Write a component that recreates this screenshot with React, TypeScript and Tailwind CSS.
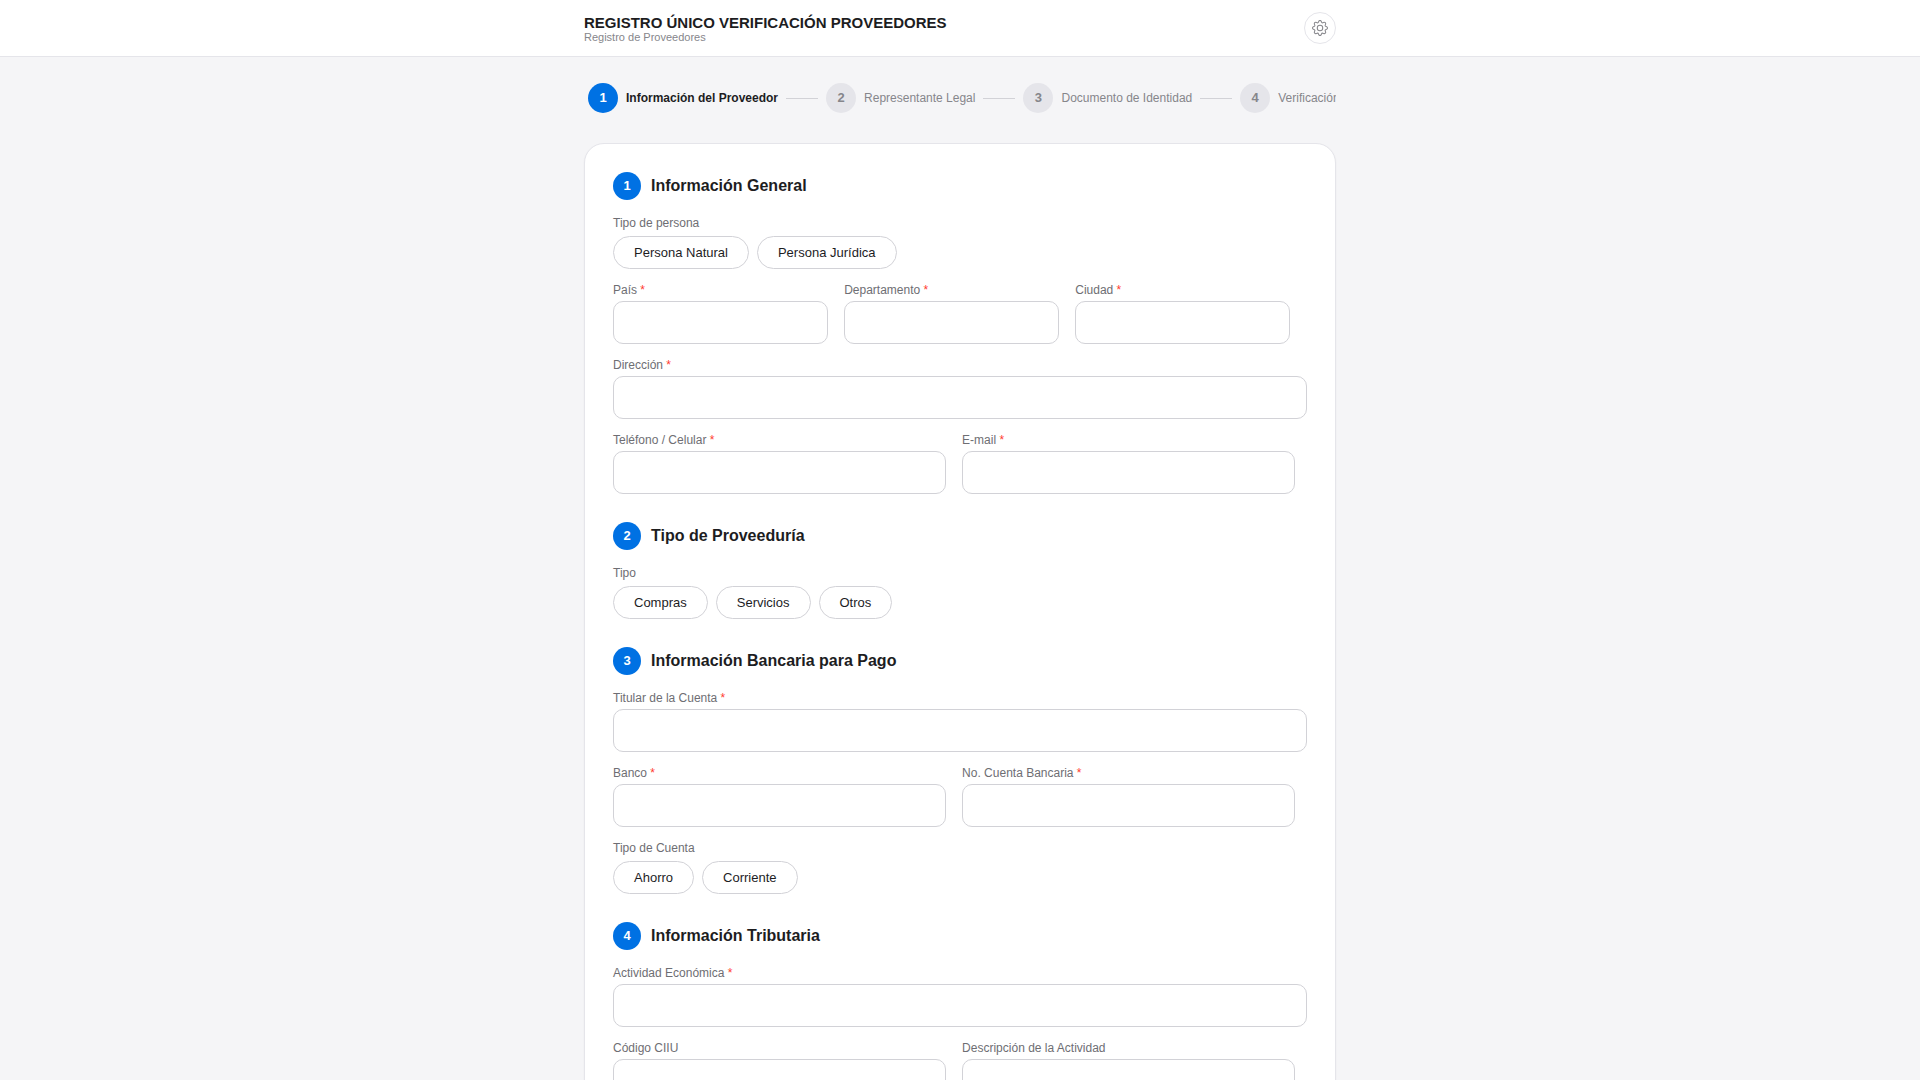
import { useId, useState } from "react";
import type { ReactNode } from "react";
import { BsGear } from "react-icons/bs";

const steps = [
  "Información del Proveedor",
  "Representante Legal",
  "Documento de Identidad",
  "Verificación",
];

function Stepper({ current }: { current: number }) {
  return (
    <nav aria-label="Pasos del registro" className="overflow-hidden px-1 pb-[30px]">
      <ol className="flex items-center gap-2">
        {steps.map((label, i) => {
          const active = i + 1 === current;
          return (
            <li key={label} className="flex shrink-0 items-center gap-2" aria-current={active ? "step" : undefined}>
              {i > 0 && <span className="h-px w-8 bg-[#d2d2d7]" />}
              <span
                className={
                  active
                    ? "flex size-[30px] items-center justify-center rounded-full bg-[#0071e3] text-[13px] font-bold text-white"
                    : "flex size-[30px] items-center justify-center rounded-full bg-[#e5e5ea] text-[13px] font-bold text-[#86868b]"
                }
              >
                {i + 1}
              </span>
              <span
                className={
                  active
                    ? "text-[12px] font-bold whitespace-nowrap text-[#1d1d1f]"
                    : "text-[12px] whitespace-nowrap text-[#86868b]"
                }
              >
                {label}
              </span>
            </li>
          );
        })}
      </ol>
    </nav>
  );
}

function Section({ number, title, children }: { number: number; title: string; children: ReactNode }) {
  return (
    <section>
      <div className="mb-4 flex items-center gap-[10px]">
        <span className="flex size-7 items-center justify-center rounded-full bg-[#0071e3] text-[13px] font-bold text-white">
          {number}
        </span>
        <h2 className="text-[16px] leading-5 font-bold text-[#1d1d1f]">{title}</h2>
      </div>
      <div className="flex flex-col gap-[14px]">{children}</div>
    </section>
  );
}

function Field({
  label,
  required = false,
  type = "text",
  width = "w-full",
}: {
  label: string;
  required?: boolean;
  type?: string;
  width?: string;
}) {
  const id = useId();
  return (
    <div className={width}>
      <label htmlFor={id} className="mb-1 block text-[12px] leading-[14px] text-[#6e6e73]">
        {label}
        {required && <span className="text-[#ff3b30]"> *</span>}
      </label>
      <input
        id={id}
        type={type}
        required={required}
        className="block h-[43px] w-full rounded-[10px] border border-[#d2d2d7] bg-white px-[14px] text-[15px] text-[#1d1d1f] outline-none focus:border-[#0071e3]"
      />
    </div>
  );
}

function Row({ children }: { children: ReactNode }) {
  return <div className="flex gap-4">{children}</div>;
}

function Choice({ label, options }: { label: string; options: string[] }) {
  const id = useId();
  const [selected, setSelected] = useState("");
  return (
    <div role="group" aria-labelledby={id}>
      <div id={id} className="mb-[6px] text-[12px] leading-[14px] text-[#6e6e73]">
        {label}
      </div>
      <div className="flex flex-wrap gap-2">
        {options.map((option) => (
          <button
            key={option}
            type="button"
            aria-pressed={selected === option}
            onClick={() => setSelected(option)}
            className="cursor-pointer rounded-full border border-[#d2d2d7] bg-white px-5 py-2 text-[13px] leading-[15px] text-[#1d1d1f] aria-pressed:border-[#0071e3] aria-pressed:bg-[#0071e3] aria-pressed:text-white"
          >
            {option}
          </button>
        ))}
      </div>
    </div>
  );
}

export default function App() {
  return (
    <div className="min-h-screen bg-[#f5f5f7] font-['Liberation_Sans',Arial,sans-serif] text-[#1d1d1f]">
      <header className="border-b border-[#e5e5ea] bg-white">
        <div className="mx-auto flex max-w-[800px] items-center justify-between px-6 py-3">
          <div>
            <h1 className="text-[15px] leading-[18px] font-bold">REGISTRO ÚNICO VERIFICACIÓN PROVEEDORES</h1>
            <p className="text-[11px] leading-[10px] text-[#86868b]">Registro de Proveedores</p>
          </div>
          <button
            type="button"
            aria-label="Configuración"
            className="flex size-8 cursor-pointer items-center justify-center rounded-full border border-[#e5e5ea] text-[#86868b]"
          >
            <BsGear size={16} />
          </button>
        </div>
      </header>

      <main className="mx-auto max-w-[800px] px-6 pt-[26px] pb-10">
        <Stepper current={1} />
        <form className="flex flex-col gap-7 rounded-[20px] border border-[#e5e5ea] bg-white p-7 shadow-xs">
          <Section number={1} title="Información General">
            <Choice label="Tipo de persona" options={["Persona Natural", "Persona Jurídica"]} />
            <Row>
              <Field label="País" required width="w-[31%]" />
              <Field label="Departamento" required width="w-[31%]" />
              <Field label="Ciudad" required width="w-[31%]" />
            </Row>
            <Field label="Dirección" required />
            <Row>
              <Field label="Teléfono / Celular" required type="tel" width="w-[48%]" />
              <Field label="E-mail" required type="email" width="w-[48%]" />
            </Row>
          </Section>

          <Section number={2} title="Tipo de Proveeduría">
            <Choice label="Tipo" options={["Compras", "Servicios", "Otros"]} />
          </Section>

          <Section number={3} title="Información Bancaria para Pago">
            <Field label="Titular de la Cuenta" required />
            <Row>
              <Field label="Banco" required width="w-[48%]" />
              <Field label="No. Cuenta Bancaria" required width="w-[48%]" />
            </Row>
            <Choice label="Tipo de Cuenta" options={["Ahorro", "Corriente"]} />
          </Section>

          <Section number={4} title="Información Tributaria">
            <Field label="Actividad Económica" required />
            <Row>
              <Field label="Código CIIU" width="w-[48%]" />
              <Field label="Descripción de la Actividad" width="w-[48%]" />
            </Row>
          </Section>
        </form>
      </main>
    </div>
  );
}
